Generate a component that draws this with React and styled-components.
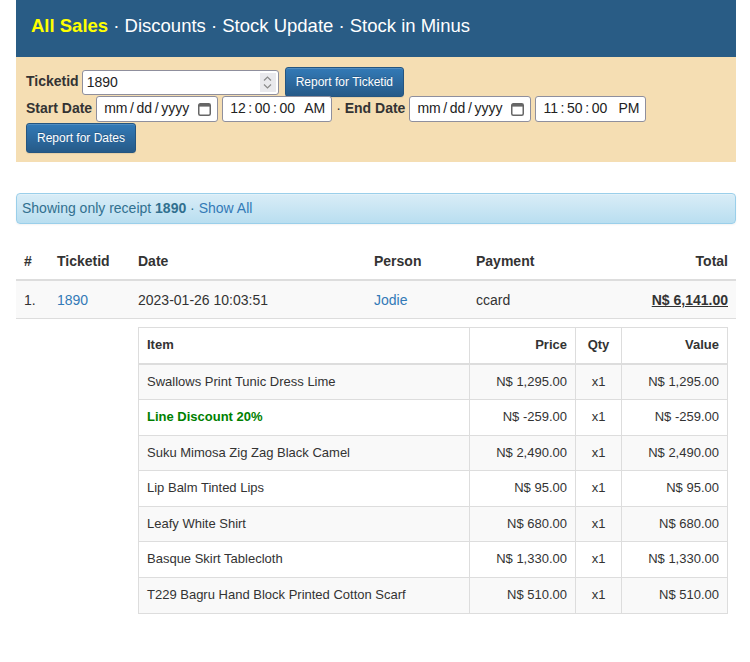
import React from "react";
import styled, { createGlobalStyle } from "styled-components";

const GlobalStyle = createGlobalStyle`
  body {
    margin: 0;
    font-family: "Liberation Sans", Arial, sans-serif;
    font-size: 14px;
    line-height: 1.42857;
    color: #333;
    background: #fff;
  }
  * { box-sizing: border-box; }
`;

const Page = styled.div`
  padding: 0 14px 0 16px;
`;

const TopBar = styled.div`
  background: #295c85;
  height: 57px;
  padding: 14px 15px 0;
  font-size: 18.5px;
  line-height: 24px;
  color: #fff;
`;

const NavActive = styled.b`
  color: #ffff00;
`;

const FilterPanel = styled.div`
  background: #f5deb3;
  padding: 10px 10px 9px;
  display: flex;
  flex-direction: column;
`;

const FormRow = styled.div`
  display: flex;
  align-items: center;
  gap: 4px;
  height: ${(p) => p.$h}px;
  margin-top: ${(p) => p.$mt || 0}px;
`;

const Label = styled.b`
  font-size: 14px;
  white-space: nowrap;
`;

const NativeInput = styled.input`
  font-family: "Liberation Sans", Arial, sans-serif;
  font-size: 14px;
  color: #222;
  background: #fff;
  border: 1px solid #8f8f9d;
  border-radius: 3px;
  padding: 1px 4px;
  height: 25px;
  width: ${(p) => p.$w}px;
  margin: 0;
  &::-webkit-inner-spin-button { opacity: 0; }
`;

const Field = styled.div`
  display: flex;
  align-items: center;
  height: 26px;
  width: ${(p) => p.$w}px;
  padding: 0 6px 0 7px;
  background: #fff;
  border: 1px solid #8f8f9d;
  border-radius: 3px;
  font-size: 14px;
  color: #222;
  word-spacing: -1.3px;
  white-space: nowrap;
`;

const Meridiem = styled.span`
  margin-left: auto;
`;

const CalIcon = styled.svg`
  margin-left: auto;
  flex: none;
`;

const SpinWrap = styled.span`
  position: relative;
  display: inline-flex;
  margin-left: -1px;
`;

const Spinner = styled.span`
  position: absolute;
  right: 3px;
  top: 3px;
  width: 16px;
  height: 19px;
  background: #e9e9ed;
  display: flex;
  align-items: center;
  justify-content: center;
  pointer-events: none;
`;

const Button = styled.button`
  font-family: "Liberation Sans", Arial, sans-serif;
  font-size: 12px;
  line-height: 18px;
  color: #fff;
  padding: 5px 10px;
  height: 30px;
  border: 1px solid #245580;
  border-radius: 3px;
  background: linear-gradient(to bottom, #337ab7 0%, #265a88 100%);
  box-shadow: inset 0 1px 0 rgba(255, 255, 255, 0.15), 0 1px 1px rgba(0, 0, 0, 0.075);
  text-shadow: 0 -1px 0 rgba(0, 0, 0, 0.2);
  margin-left: ${(p) => p.$ml || 0}px;
  cursor: pointer;
`;

const Sep = styled.span`
  white-space: nowrap;
`;

const Alert = styled.div`
  margin-top: 31px;
  height: 31px;
  padding: 4px 5px;
  line-height: 21px;
  color: #31708f;
  border: 1px solid #9acfea;
  border-radius: 4px;
  background: linear-gradient(to bottom, #d9edf7 0%, #b9def0 100%);
  box-shadow: inset 0 1px 0 rgba(255, 255, 255, 0.25), 0 1px 2px rgba(0, 0, 0, 0.05);
`;

const Link = styled.a`
  color: #337ab7;
  text-decoration: none;
`;

const SalesTable = styled.table`
  width: 100%;
  margin-top: 19px;
  border-collapse: collapse;
  border-spacing: 0;
`;

const Th = styled.th`
  text-align: ${(p) => p.$align || "left"};
  padding: 8px;
  line-height: 20px;
  vertical-align: bottom;
  border-bottom: 2px solid #ddd;
  width: ${(p) => (p.$w ? `${p.$w}px` : "auto")};
`;

const Row = styled.tr`
  background: ${(p) => (p.$striped ? "#f9f9f9" : "#fff")};
`;

const Td = styled.td`
  text-align: ${(p) => p.$align || "left"};
  padding: ${(p) => (p.$nested ? "8px" : "9px 8px 8px")};
  line-height: 20px;
  vertical-align: top;
  border-top: 1px solid #ddd;
`;

const Total = styled.b`
  text-decoration: underline;
`;

const ItemsTable = styled.table`
  width: 100%;
  border-collapse: collapse;
  border: 1px solid #ddd;
  font-size: 13px;
  line-height: 18.57px;
`;

const ItemTh = styled.th`
  text-align: ${(p) => p.$align || "left"};
  padding: 8px;
  border: 1px solid #ddd;
  border-bottom-width: 2px;
  width: ${(p) => (p.$w ? `${p.$w}px` : "auto")};
`;

const ItemTd = styled.td`
  text-align: ${(p) => p.$align || "left"};
  padding: 8px;
  border: 1px solid #ddd;
  color: ${(p) => (p.$discount ? "#008000" : "inherit")};
  font-weight: ${(p) => (p.$discount ? 700 : 400)};
`;

const items = [
  { name: "Swallows Print Tunic Dress Lime", price: "N$ 1,295.00", value: "N$ 1,295.00" },
  { name: "Line Discount 20%", price: "N$ -259.00", value: "N$ -259.00", discount: true },
  { name: "Suku Mimosa Zig Zag Black Camel", price: "N$ 2,490.00", value: "N$ 2,490.00" },
  { name: "Lip Balm Tinted Lips", price: "N$ 95.00", value: "N$ 95.00" },
  { name: "Leafy White Shirt", price: "N$ 680.00", value: "N$ 680.00" },
  { name: "Basque Skirt Tablecloth", price: "N$ 1,330.00", value: "N$ 1,330.00" },
  { name: "T229 Bagru Hand Block Printed Cotton Scarf", price: "N$ 510.00", value: "N$ 510.00" },
];

function SpinIcon() {
  return (
    <svg width="9" height="15" viewBox="0 0 9 15" fill="none" stroke="#8a8a8a" strokeWidth="1.2">
      <path d="M1 5.5 L4.5 2 L8 5.5" />
      <path d="M1 9.5 L4.5 13 L8 9.5" />
    </svg>
  );
}

function DateField({ w }) {
  return (
    <Field $w={w}>
      <span>mm / dd / yyyy</span>
      <CalIcon width="13" height="14" viewBox="0 0 13 14" fill="none">
        <rect x="0.75" y="1.75" width="11.5" height="11.5" rx="1.5" stroke="#666" strokeWidth="1.5" />
        <rect x="1" y="2" width="11" height="2.6" fill="#666" />
      </CalIcon>
    </Field>
  );
}

function TimeField({ w, time, ampm }) {
  return (
    <Field $w={w}>
      <span>{time}</span>
      <Meridiem>{ampm}</Meridiem>
    </Field>
  );
}

export default function App() {
  return (
    <Page>
      <GlobalStyle />
      <TopBar>
        <NavActive>All Sales</NavActive> · Discounts · Stock Update · Stock in Minus
      </TopBar>

      <FilterPanel>
        <FormRow $h={30}>
          <Label>Ticketid</Label>
          <SpinWrap>
            <NativeInput type="number" defaultValue="1890" $w={197} />
            <Spinner>
              <SpinIcon />
            </Spinner>
          </SpinWrap>
          <Button $ml={2}>Report for Ticketid</Button>
        </FormRow>
        <FormRow $h={26} $mt={-1}>
          <Label>Start Date</Label>
          <DateField w={122} />
          <TimeField w={110} time="12 : 00 : 00" ampm="AM" />
          <Sep>
            · <Label>End Date</Label>
          </Sep>
          <DateField w={122} />
          <TimeField w={111} time="11 : 50 : 00" ampm="PM" />
        </FormRow>
        <FormRow $h={30} $mt={1}>
          <Button>Report for Dates</Button>
        </FormRow>
      </FilterPanel>

      <Alert>
        Showing only receipt <b>1890</b> · <Link href="#">Show All</Link>
      </Alert>

      <SalesTable>
        <thead>
          <tr>
            <Th $w={33}>#</Th>
            <Th $w={81}>Ticketid</Th>
            <Th $w={236}>Date</Th>
            <Th $w={102}>Person</Th>
            <Th $w={120}>Payment</Th>
            <Th $align="right">Total</Th>
          </tr>
        </thead>
        <tbody>
          <Row $striped>
            <Td>1.</Td>
            <Td>
              <Link href="#">1890</Link>
            </Td>
            <Td>2023-01-26 10:03:51</Td>
            <Td>
              <Link href="#">Jodie</Link>
            </Td>
            <Td>ccard</Td>
            <Td $align="right">
              <Total>N$ 6,141.00</Total>
            </Td>
          </Row>
          <Row>
            <Td $nested />
            <Td $nested />
            <Td $nested colSpan={4}>
              <ItemsTable>
                <thead>
                  <tr>
                    <ItemTh>Item</ItemTh>
                    <ItemTh $align="right" $w={106}>Price</ItemTh>
                    <ItemTh $align="center" $w={46}>Qty</ItemTh>
                    <ItemTh $align="right" $w={106}>Value</ItemTh>
                  </tr>
                </thead>
                <tbody>
                  {items.map((it, i) => (
                    <Row key={i} $striped={i % 2 === 0}>
                      <ItemTd $discount={it.discount}>{it.name}</ItemTd>
                      <ItemTd $align="right">{it.price}</ItemTd>
                      <ItemTd $align="center">x1</ItemTd>
                      <ItemTd $align="right">{it.value}</ItemTd>
                    </Row>
                  ))}
                </tbody>
              </ItemsTable>
            </Td>
          </Row>
        </tbody>
      </SalesTable>
    </Page>
  );
}
